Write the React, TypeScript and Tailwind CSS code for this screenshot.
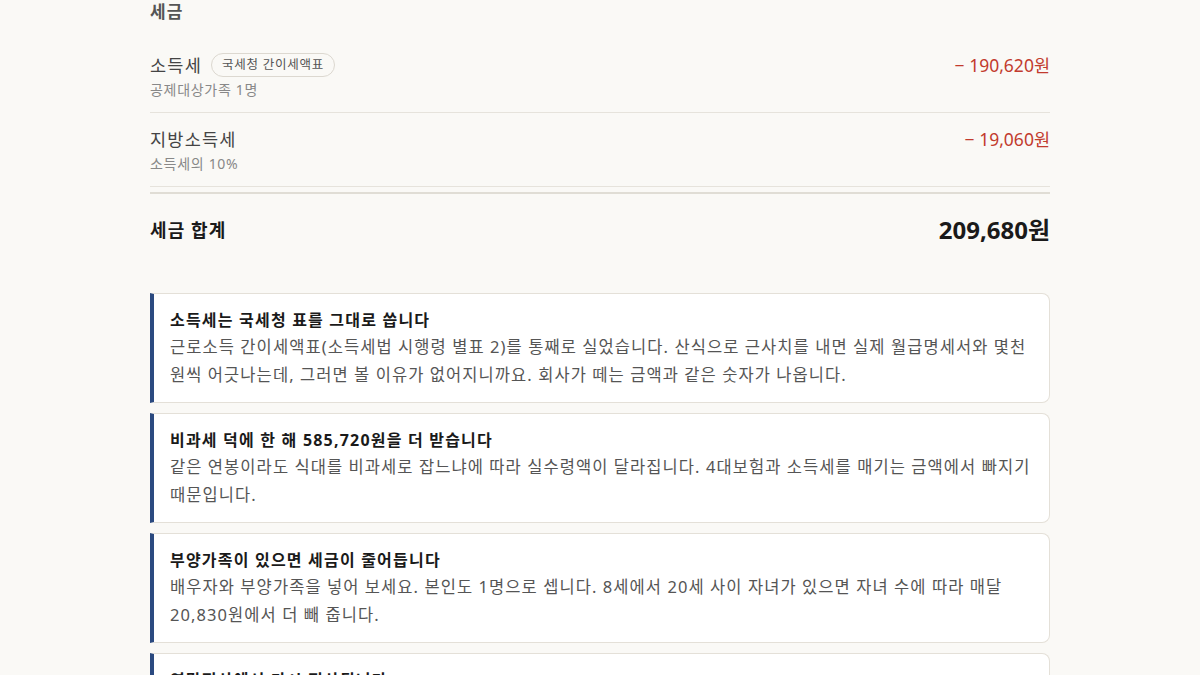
import React from "react";

const FONT = { fontFamily: '"Noto Sans", "Noto Sans CJK KR", sans-serif' };

interface TaxRowProps {
  label: string;
  badge?: string;
  sub: string;
  amount: string;
}

const TaxRow = ({ label, badge, sub, amount }: TaxRowProps) => (
  <div className="flex items-start justify-between border-b border-[#e6e3dc] pt-[13px] pb-[12px]">
    <div className="flex flex-col">
      <div className="flex items-center gap-[9px] h-[26px]">
        <span className="text-[17.5px] leading-[26px] tracking-[0.07em] text-[#444]">{label}</span>
        {badge && (
          <span className="rounded-full border border-[#dcd8d0] px-[10px] h-[24px] flex items-center text-[12.5px] tracking-[0.06em] text-[#555]">
            {badge}
          </span>
        )}
      </div>
      <span className="mt-[2px] text-[14px] leading-[20px] tracking-[0.05em] text-[#888]">{sub}</span>
    </div>
    <span className="text-[17.5px] leading-[26px] text-[#c23b2e]">{amount}</span>
  </div>
);

interface NoteCardProps {
  title: string;
  body: string;
}

const NoteCard = ({ title, body }: NoteCardProps) => (
  <div className="rounded-r-lg border border-l-4 border-[#e4e0d8] border-l-[#2b4a80] bg-white pl-4 pr-3 pt-[13px] pb-[13px]">
    <p className="text-[16px] font-bold leading-[26px] tracking-[0.075em] text-[#1a1a1a] break-keep">{title}</p>
    <p className="text-[16.5px] leading-[28px] tracking-[0.065em] text-[#555] break-keep">{body}</p>
  </div>
);

export default function App() {
  return (
    <div className="min-h-screen bg-[#faf9f6]" style={FONT}>
      <div className="mx-auto w-[900px]">
        <h2 className="text-[17px] font-bold leading-[24px] tracking-[0.06em] text-[#555]">세금</h2>
        <div className="mt-[15px]">
          <TaxRow label="소득세" badge="국세청 간이세액표" sub="공제대상가족 1명" amount="− 190,620원" />
          <TaxRow label="지방소득세" sub="소득세의 10%" amount="− 19,060원" />
        </div>
        <div className="mt-[5px] flex items-center justify-between border-t-2 border-[#e0ddd5] pt-[18px] pb-[17px]">
          <span className="text-[18px] font-bold tracking-[0.06em] text-[#1a1a1a]">세금 합계</span>
          <span className="text-[24px] font-bold leading-[36px] text-[#1a1a1a]">209,680원</span>
        </div>
        <div className="mt-[28px] flex flex-col gap-[10px]">
          <NoteCard
            title="소득세는 국세청 표를 그대로 씁니다"
            body="근로소득 간이세액표(소득세법 시행령 별표 2)를 통째로 실었습니다. 산식으로 근사치를 내면 실제 월급명세서와 몇천 원씩 어긋나는데, 그러면 볼 이유가 없어지니까요. 회사가 떼는 금액과 같은 숫자가 나옵니다."
          />
          <NoteCard
            title="비과세 덕에 한 해 585,720원을 더 받습니다"
            body="같은 연봉이라도 식대를 비과세로 잡느냐에 따라 실수령액이 달라집니다. 4대보험과 소득세를 매기는 금액에서 빠지기 때문입니다."
          />
          <NoteCard
            title="부양가족이 있으면 세금이 줄어듭니다"
            body="배우자와 부양가족을 넣어 보세요. 본인도 1명으로 셉니다. 8세에서 20세 사이 자녀가 있으면 자녀 수에 따라 매달 20,830원에서 더 빼 줍니다."
          />
          <NoteCard
            title="연말정산에서 다시 정산됩니다"
            body="매달 떼는 소득세는 미리 내는 세금입니다. 실제 세금은 연말정산에서 확정되고, 더 낸 만큼은 돌려받습니다."
          />
        </div>
      </div>
    </div>
  );
}
